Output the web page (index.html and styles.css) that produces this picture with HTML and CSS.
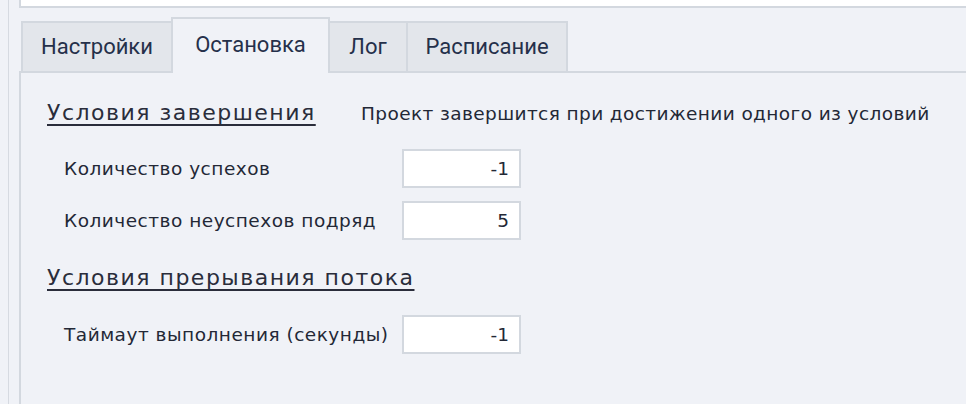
FILE: index.html
```html
<!DOCTYPE html>
<html lang="ru">
<head>
<meta charset="utf-8">
<link rel="stylesheet" href="styles.css">
</head>
<body>
<div class="page">
  <div class="frame">
    <div class="topbox"></div>
    <div class="tabs">
      <div class="tab first">Настройки</div>
      <div class="tab active">Остановка</div>
      <div class="tab log">Лог</div>
      <div class="tab sched">Расписание</div>
    </div>
    <div class="panel">
      <div class="section-head">
        <span class="heading fixed">Условия завершения</span>
        <span class="desc">Проект завершится при достижении одного из условий</span>
      </div>
      <div class="row first-row">
        <span class="label">Количество успехов</span>
        <div class="input">-1</div>
      </div>
      <div class="row">
        <span class="label">Количество неуспехов подряд</span>
        <div class="input">5</div>
      </div>
      <div class="section-head second">
        <span class="heading">Условия прерывания потока</span>
      </div>
      <div class="row after-head">
        <span class="label">Таймаут выполнения (секунды)</span>
        <div class="input">-1</div>
      </div>
    </div>
  </div>
</div>
</body>
</html>
```

FILE: styles.css
```css
html, body {
  margin: 0;
  padding: 0;
  width: 966px;
  height: 404px;
  overflow: hidden;
  background: #f0f2f7;
}
.page {
  height: 404px;
  padding-left: 8px;
  box-sizing: border-box;
}
.frame {
  height: 404px;
  border-left: 1px solid #d6dae1;
  padding-left: 10px;
  display: flex;
  flex-direction: column;
}
.topbox {
  height: 6px;
  background: #ffffff;
  border-left: 2px solid #d3d8df;
  border-bottom: 2px solid #d3d8df;
}
.tabs {
  display: flex;
  align-items: flex-end;
  margin-top: 9px;
  padding-left: 2px;
  height: 54px;
  font-family: Roboto, "Open Sans", sans-serif;
  font-size: 22px;
  color: #25304a;
}
.tab {
  box-sizing: border-box;
  height: 50px;
  background: #e3e6eb;
  border: 2px solid #d3d8df;
  border-bottom: none;
  display: flex;
  align-items: center;
  justify-content: center;
  margin-left: -2px;
  padding-bottom: 2px;
}
.tab.first { width: 152px; margin-left: 0; }
.tab.active {
  width: 159px;
  background: #f0f2f7;
  position: relative;
  z-index: 1;
  margin-bottom: -2px;
  height: 56px;
  padding-bottom: 4px;
}
.tab.log { width: 80px; }
.tab.sched { width: 162px; }
.panel {
  flex: 1;
  border-top: 2px solid #d3d8df;
  border-left: 2px solid #d3d8df;
  padding: 25px 0 0 26px;
  font-family: "DejaVu Sans", sans-serif;
  color: #232836;
}
.section-head {
  display: flex;
  align-items: baseline;
  height: 30px;
  line-height: 30px;
  white-space: nowrap;
}
.section-head.second {
  margin-top: 23px;
}
.heading {
  font-size: 22px;
  letter-spacing: 1.5px;
  text-decoration: underline;
  text-decoration-skip-ink: none;
  text-underline-offset: 4px;
  text-decoration-thickness: 2px;
  color: #2a2d3b;
  flex-shrink: 0;
}
.heading.fixed {
  width: 314px;
}
.desc {
  font-size: 18.5px;
  letter-spacing: 0.4px;
}
.row {
  display: flex;
  align-items: center;
  padding-left: 17px;
  height: 39px;
  margin-top: 13px;
  white-space: nowrap;
}
.row.first-row { margin-top: 21px; }
.row.after-head { margin-top: 22px; }
.label {
  font-size: 18.5px;
  letter-spacing: 0.5px;
  width: 338px;
  line-height: 39px;
}
.input {
  box-sizing: border-box;
  width: 119px;
  height: 39px;
  background: #ffffff;
  border: 2px solid #d3d8df;
  text-align: right;
  padding-right: 10px;
  line-height: 35px;
  font-size: 18.5px;
}
```
